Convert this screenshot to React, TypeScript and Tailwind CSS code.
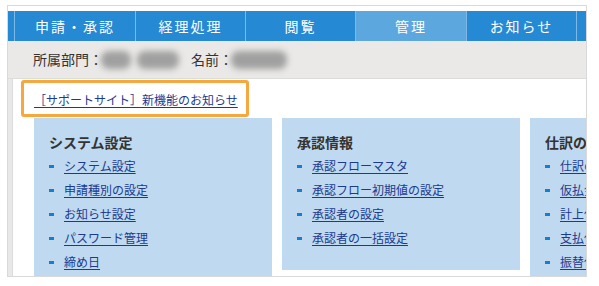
import React from "react";

const font = { fontFamily: '"Noto Sans CJK JP", "Noto Sans", sans-serif' };

const tabs = [
  { label: "申請・承認", w: "w-[121px]", active: false },
  { label: "経理処理", w: "w-[110px]", active: false },
  { label: "閲覧", w: "w-[110px]", active: false },
  { label: "管理", w: "w-[111px]", active: true },
  { label: "お知らせ", w: "w-[110px]", active: false },
];

const panels = [
  {
    title: "システム設定",
    items: ["システム設定", "申請種別の設定", "お知らせ設定", "パスワード管理", "締め日"],
    h: "h-[200px]",
  },
  {
    title: "承認情報",
    items: ["承認フローマスタ", "承認フロー初期値の設定", "承認者の設定", "承認者の一括設定"],
    h: "h-[152px]",
  },
  {
    title: "仕訳の連携",
    items: ["仕訳の出力", "仮払金の精算", "計上仕訳の出力", "支払仕訳の出力", "振替仕訳の出力"],
    h: "h-[200px]",
  },
];

function Panel({ title, items, h }: { title: string; items: string[]; h: string }) {
  return (
    <div className={`w-[238px] shrink-0 ${h} bg-[#bed9f0] pl-[15px] pt-[12px] pb-[20px]`}>
      <div className="h-[24px] flex items-center text-[14px] font-bold text-[#333333] whitespace-nowrap">
        {title}
      </div>
      {items.map((it) => (
        <div key={it} className="h-[24px] flex items-center whitespace-nowrap">
          <span className="w-[5px] h-[3px] bg-[#1a7dcc] mr-[10px] shrink-0" />
          <a className="text-[12px] text-[#1c3a8e] underline underline-offset-[2px] cursor-pointer">
            {it}
          </a>
        </div>
      ))}
    </div>
  );
}

export default function App() {
  return (
    <div className="w-[599px] h-[286px] bg-white pt-[5px] pl-[7px]" style={font}>
      <div className="w-[580px] h-[272px] border border-[#d9d9d9] overflow-hidden flex flex-col pt-[5px] bg-white">
        {/* nav */}
        <div className="h-[30px] flex bg-[#2589d3] shrink-0">
          <div className="w-[6px] shrink-0" />
          {tabs.map((t) => (
            <div
              key={t.label}
              className={`${t.w} shrink-0 border-l border-[#7db8e6] flex items-center justify-center text-white text-[14px] tracking-[2px] ${
                t.active ? "bg-[#5ca7de]" : ""
              }`}
            >
              {t.label}
            </div>
          ))}
          <div className="flex-1 border-l border-[#7db8e6]" />
        </div>
        {/* info bar */}
        <div className="h-[38px] shrink-0 bg-[#eae9e7] border-b border-[#dcdcdc] flex items-center pl-[25px] text-[14px] text-[#333333]">
          <span>所属部門：</span>
          <span className="ml-[-2px] w-[30px] h-[18px] rounded-[8px] bg-[#a0a0a0] blur-[3px]" />
          <span className="ml-[6px] w-[42px] h-[18px] rounded-[8px] bg-[#a0a0a0] blur-[3px]" />
          <span className="ml-[12px]">名前：</span>
          <span className="ml-[-2px] w-[56px] h-[18px] rounded-[8px] bg-[#a0a0a0] blur-[3px]" />
        </div>
        {/* content */}
        <div className="flex-1 flex min-h-0">
          <div className="w-[5px] shrink-0 bg-[#e8e8e8] border-r border-[#dcdcdc]" />
          <div className="flex-1 min-w-0 flex flex-col">
            <div className="shrink-0 mt-[1px] ml-[8px] w-[228px] h-[37px] border-[3px] border-[#f6a83f] rounded-[3px] flex items-center pl-[10px] pt-[2px]">
              <a className="text-[12px] text-[#1c3a8e] underline underline-offset-[2px] whitespace-nowrap cursor-pointer">
                ［サポートサイト］新機能のお知らせ
              </a>
            </div>
            <div className="shrink-0 ml-[21px] mt-[1px] flex gap-[10px] items-start">
              {panels.map((p) => (
                <Panel key={p.title} {...p} />
              ))}
            </div>
          </div>
        </div>
      </div>
    </div>
  );
}
